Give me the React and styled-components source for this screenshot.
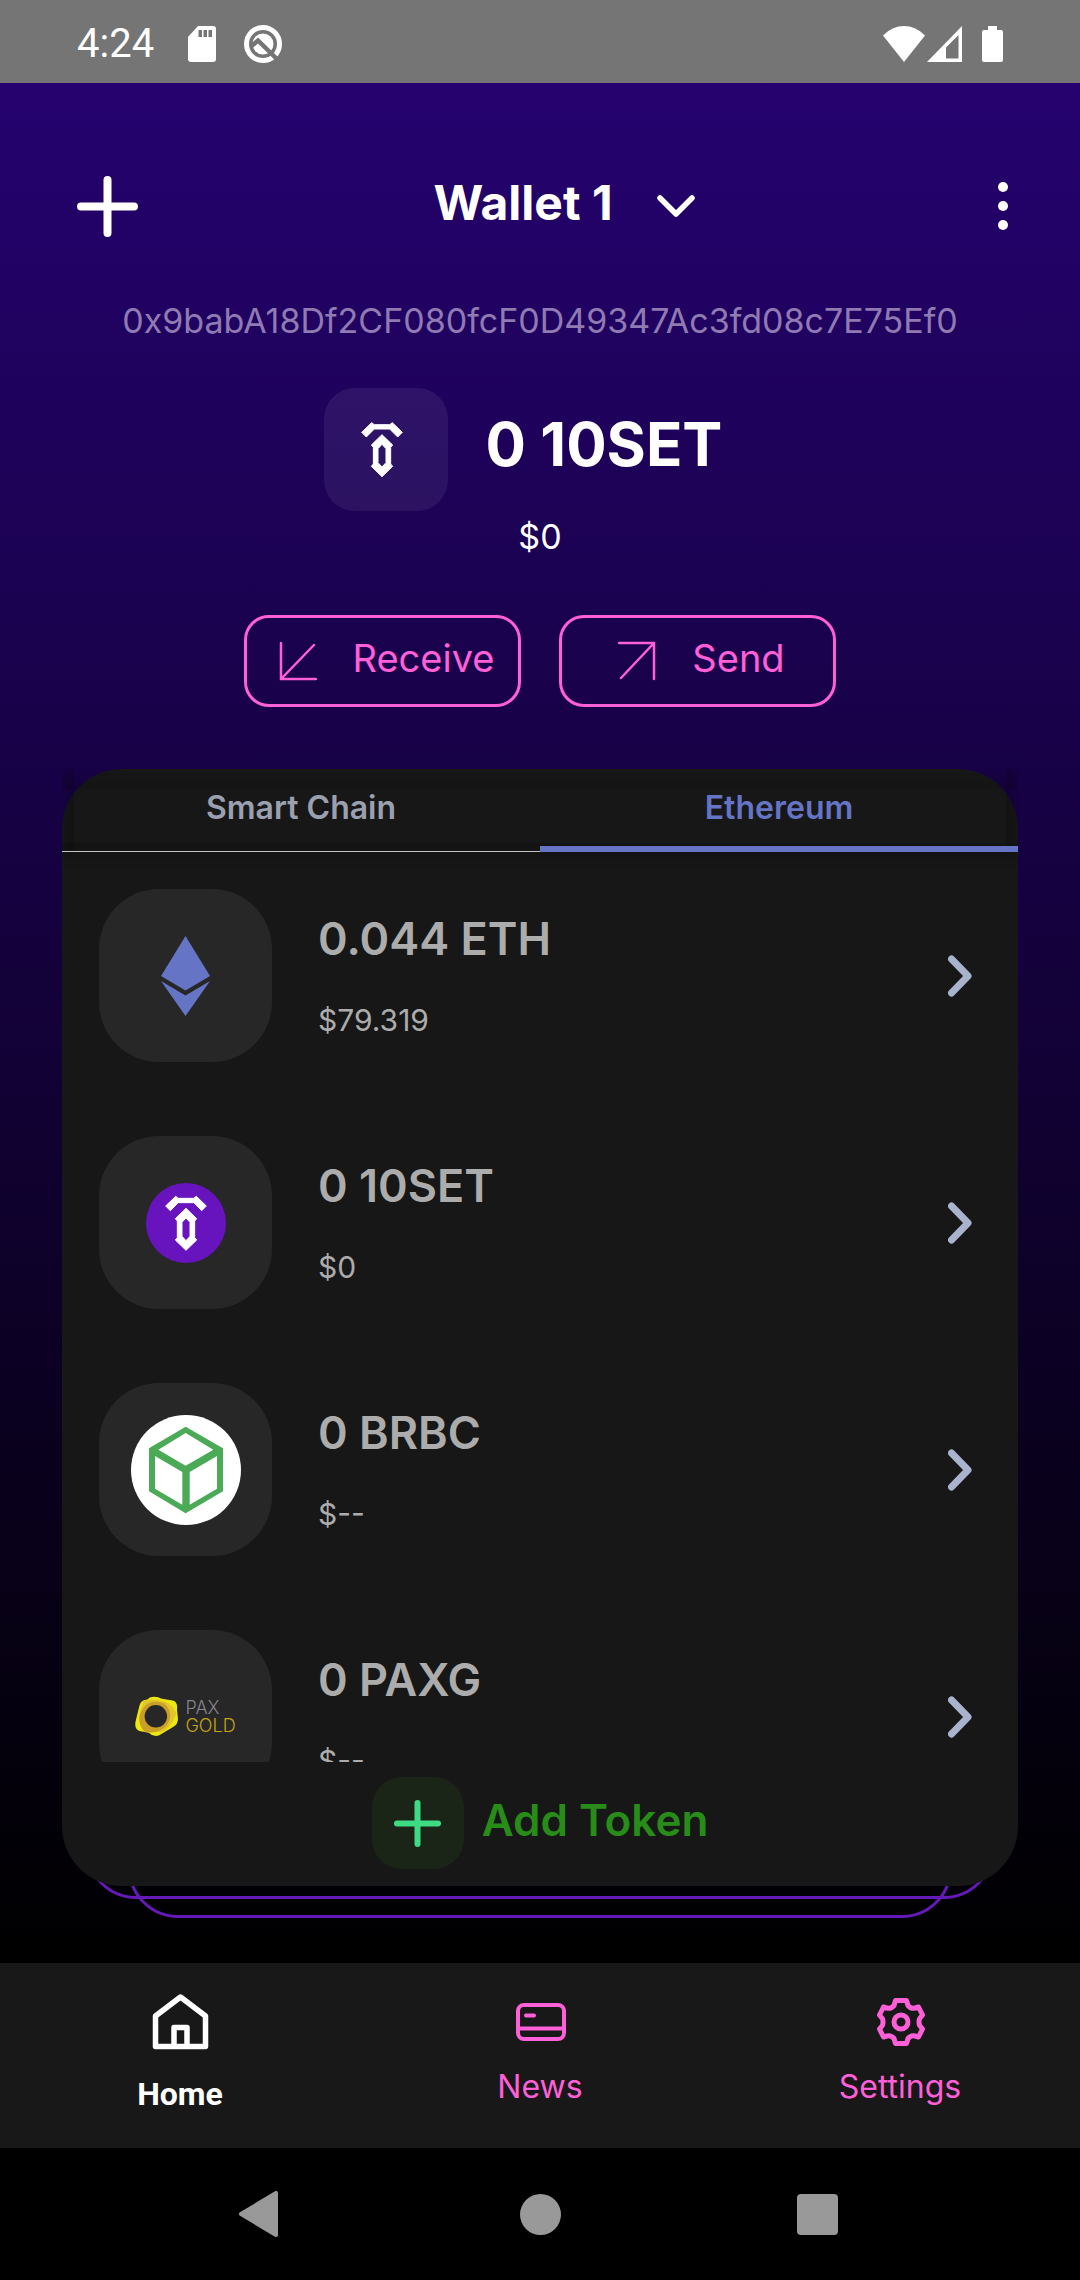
import React from "react";
import styled, { createGlobalStyle } from "styled-components";

const pink = "#ff5fd7";
const surface = "#171717";
const periwinkle = "#6574c4";

const GlobalStyle = createGlobalStyle`
  *, *::before, *::after { box-sizing: border-box; }
  body { margin: 0; background: #000; }
  button { font: inherit; color: inherit; background: none; border: 0; padding: 0; cursor: pointer; }
  a { color: inherit; text-decoration: none; }
  svg { display: block; flex: none; }
`;

const Screen = styled.div`
  display: flex;
  flex-direction: column;
  height: 100vh;
  font-family: Inter, "Noto Sans", sans-serif;
  color: #fff;
`;

const StatusBar = styled.header`
  display: flex;
  align-items: center;
  justify-content: space-between;
  height: 83px;
  flex: none;
  padding: 4px 77px 0;
  background: #757575;
  font-family: Roboto, sans-serif;
  font-size: 40px;
  line-height: 48px;
`;

const StatusGroup = styled.div`
  display: flex;
  align-items: center;
  gap: ${(p) => p.$gap}px;
`;

const Wallet = styled.main`
  flex: 1;
  min-height: 0;
  display: flex;
  flex-direction: column;
  padding: 63px 62px 77px;
  background: linear-gradient(#25026f, #000);
`;

const TopBar = styled.div`
  display: flex;
  align-items: center;
  justify-content: space-between;
  height: 120px;
  flex: none;
  padding: 0 10px;
`;

const IconButton = styled.button`
  display: flex;
  align-items: center;
  justify-content: ${(p) => p.$align || "center"};
  width: 70px;
  height: 70px;
`;

const WalletPicker = styled.button`
  display: flex;
  align-items: center;
  gap: 44px;
  padding-left: 48px;
  font-size: 48px;
  font-weight: 700;
  line-height: 56px;
`;

const PickerLabel = styled.span`
  padding-bottom: 6px;
`;

const Address = styled.p`
  margin: 31px 0 0;
  font-size: 34px;
  line-height: 48px;
  text-align: center;
  color: #8f7bb2;
`;

const Balance = styled.div`
  display: flex;
  align-items: center;
  justify-content: center;
  gap: 38px;
  margin-top: 43px;
  padding-right: 34px;
`;

const BalanceBadge = styled.div`
  display: flex;
  align-items: center;
  justify-content: center;
  width: 124px;
  height: 123px;
  padding-right: 8px;
  border-radius: 31px;
  background: rgba(255, 255, 255, 0.07);
`;

const BalanceAmount = styled.h1`
  margin: 0;
  padding-bottom: 12px;
  font-size: 60px;
  font-weight: 700;
  line-height: 72px;
`;

const Fiat = styled.p`
  margin: 2px 0 0;
  font-size: 34px;
  line-height: 48px;
  text-align: center;
`;

const Actions = styled.div`
  display: flex;
  justify-content: center;
  gap: 38px;
  margin-top: 54px;
`;

const ActionButton = styled.button`
  display: flex;
  align-items: center;
  justify-content: center;
  gap: 36px;
  width: 277px;
  height: 92px;
  padding-left: 8px;
  border: 3px solid ${pink};
  border-radius: 25px;
  color: ${pink};
  font-size: 38px;
  line-height: 48px;
`;

const ActionLabel = styled.span`
  padding-bottom: 6px;
`;

const CardStack = styled.section`
  position: relative;
  z-index: 0;
  flex: 1;
  min-height: 0;
  display: flex;
  flex-direction: column;
  margin-top: 62px;
`;

const StackEdge = styled.div`
  position: absolute;
  z-index: -1;
  bottom: ${(p) => -p.$drop}px;
  left: ${(p) => p.$inset}px;
  right: ${(p) => p.$inset}px;
  height: 160px;
  border: 3px solid #6419b8;
  border-radius: 50px;
`;

const Card = styled.div`
  flex: 1;
  min-height: 0;
  display: flex;
  flex-direction: column;
  border-radius: 60px;
  background: ${surface};
`;

const Tabs = styled.div`
  display: flex;
  flex: none;
  height: 83px;
  box-shadow: 0 6px 10px rgba(0, 0, 0, 0.2);
  clip-path: inset(0 0 -16px 0);
  background:
    linear-gradient(transparent, rgba(0, 0, 0, 0.16)) top / 100% 20px no-repeat,
    linear-gradient(rgba(0, 0, 0, 0.16), rgba(0, 0, 0, 0.16)) bottom / 100% 9px no-repeat,
    linear-gradient(to right, rgba(0, 0, 0, 0.08), rgba(0, 0, 0, 0.2)) left / 12px 100% no-repeat,
    linear-gradient(to left, rgba(0, 0, 0, 0.08), rgba(0, 0, 0, 0.2)) right / 12px 100% no-repeat;
`;

const Tab = styled.button`
  flex: 1;
  padding-bottom: ${(p) => (p.$active ? 0 : 5)}px;
  border-bottom: ${(p) => (p.$active ? `6px solid ${periwinkle}` : "1px solid #c4c4c4")};
  color: ${(p) => (p.$active ? periwinkle : "#9ba0b0")};
  font-size: 32px;
  font-weight: 600;
  line-height: 40px;
`;

const TokenList = styled.ul`
  flex: 1;
  min-height: 0;
  margin: 0;
  padding: 0;
  list-style: none;
  overflow-y: auto;
  scrollbar-width: none;
`;

const TokenRow = styled.a`
  display: flex;
  align-items: center;
  gap: 46px;
  padding: 37px 46px 37px 37px;
`;

const TokenTile = styled.div`
  display: flex;
  align-items: center;
  justify-content: center;
  width: 173px;
  height: 173px;
  flex: none;
  border-radius: 60px;
  background: #272727;
`;

const TokenText = styled.div`
  display: flex;
  flex-direction: column;
  gap: 25px;
  flex: 1;
  color: #acacac;
`;

const TokenAmount = styled.span`
  font-size: 45px;
  font-weight: 600;
  line-height: 64px;
`;

const TokenValue = styled.span`
  font-size: 30px;
  line-height: 48px;
`;

const PaxLogo = styled.div`
  display: flex;
  align-items: center;
  gap: 7px;
`;

const PaxName = styled.div`
  display: flex;
  flex-direction: column;
  font-size: 18px;
  font-weight: 300;
  line-height: 18px;
  color: #85858b;
`;

const PaxGold = styled.span`
  color: #c2a414;
`;

const AddToken = styled.button`
  display: flex;
  align-items: center;
  justify-content: center;
  gap: 18px;
  flex: none;
  padding: 15px 0 17px;
  color: #288c18;
  font-size: 44px;
  font-weight: 600;
  line-height: 48px;
`;

const AddBadge = styled.span`
  display: flex;
  align-items: center;
  justify-content: center;
  width: 92px;
  height: 92px;
  border-radius: 30px;
  background: #1a2518;
`;

const AddLabel = styled.span`
  padding-bottom: 6px;
`;

const BottomNav = styled.nav`
  display: flex;
  flex: none;
  height: 185px;
  background: #181818;
`;

const NavItem = styled.a`
  flex: 1;
  display: flex;
  flex-direction: column;
  align-items: center;
  gap: ${(p) => (p.$active ? 20 : 13)}px;
  padding-top: 27px;
  color: ${(p) => (p.$active ? "#fff" : pink)};
  font-family: ${(p) => (p.$active ? "Roboto" : "Inter")}, sans-serif;
  font-size: 32px;
  font-weight: ${(p) => (p.$active ? 700 : 400)};
  line-height: 40px;
`;

const SystemNav = styled.nav`
  display: flex;
  align-items: center;
  justify-content: center;
  flex: none;
  height: 132px;
  background: #000;
`;

const SystemButton = styled.button`
  display: flex;
  align-items: center;
  justify-content: center;
  width: 277px;
  height: 100%;
`;

const SdCardIcon = () => (
  <svg width="28" height="36" viewBox="0 0 28 36" fill="#fff">
    <path
      fillRule="evenodd"
      d="M10 0H25a3 3 0 0 1 3 3V33a3 3 0 0 1-3 3H3a3 3 0 0 1-3-3V11ZM10.500 4V11H14V4ZM15.500 4V11H19V4ZM20.500 4V11H24V4Z"
    />
  </svg>
);

const SearchBadgeIcon = () => (
  <svg width="38" height="38" viewBox="0 0 38 38" fill="none">
    <circle cx="19" cy="19" r="16.500" stroke="#fff" strokeWidth="5" />
    <circle cx="19" cy="19" r="10.500" fill="#fff" />
    <path d="M7 21.500L14 15.500L36 37" stroke="#757575" strokeWidth="4.500" />
  </svg>
);

const WifiIcon = () => (
  <svg width="42" height="36" viewBox="0 0 42 36" fill="#fff">
    <path d="M0 9.500Q9 0 21 0T42 9.500L21 36Z" />
  </svg>
);

const SignalIcon = () => (
  <svg width="35" height="36" viewBox="0 0 35 36" fill="#fff">
    <path fillRule="evenodd" d="M35 0V36H0ZM31.500 9L19 21.500V32.500H31.500Z" />
  </svg>
);

const BatteryIcon = () => (
  <svg width="21" height="36" viewBox="0 0 21 36" fill="#fff">
    <path d="M6 0H15V4H19a2 2 0 0 1 2 2V34a2 2 0 0 1-2 2H2a2 2 0 0 1-2-2V6a2 2 0 0 1 2-2H6Z" />
  </svg>
);

const PlusIcon = ({ size, weight, color }) => (
  <svg
    width={size}
    height={size}
    viewBox={`0 0 ${size} ${size}`}
    stroke={color}
    strokeWidth={weight}
    strokeLinecap="round"
  >
    <path d={`M${size / 2} ${weight / 2}V${size - weight / 2}M${weight / 2} ${size / 2}H${size - weight / 2}`} />
  </svg>
);

const ChevronDown = () => (
  <svg width="38" height="24" viewBox="0 0 38 24" fill="none" stroke="#fff" strokeWidth="5.500" strokeLinecap="round" strokeLinejoin="round">
    <path d="M3 4L19 20L35 4" />
  </svg>
);

const ChevronRight = () => (
  <svg width="24" height="42" viewBox="0 0 24 42" fill="none" stroke="#aab3ce" strokeWidth="7" strokeLinecap="round" strokeLinejoin="round">
    <path d="M3.500 4L20 21L3.500 38" />
  </svg>
);

const DotsIcon = () => (
  <svg width="10" height="48" viewBox="0 0 10 48" fill="#fff">
    <circle cx="5" cy="5" r="5" />
    <circle cx="5" cy="24" r="5" />
    <circle cx="5" cy="43" r="5" />
  </svg>
);

const ReceiveIcon = () => (
  <svg width="38" height="40" viewBox="0 0 38 40" fill="none" stroke="currentColor" strokeWidth="2.500" strokeLinecap="round">
    <path d="M2 2V38H37M2 38L35 4" />
  </svg>
);

const SendIcon = () => (
  <svg width="38" height="40" viewBox="0 0 38 40" fill="none" stroke="currentColor" strokeWidth="2.500" strokeLinecap="round">
    <path d="M1 2H36V38M36 2L3 37" />
  </svg>
);

const SetMark = () => (
  <g fill="#fff" stroke="#fff" strokeWidth="3" strokeLinejoin="round">
    <path d="M254 285L284 256L292 262H338L346 256L376 285L362 299L338 275H292L268 299Z" />
    <path
      fillRule="evenodd"
      d="M315 292L347 323L341 330V380L347 387L315 418L283 387L289 380V330L283 323ZM315 321L303 334V376L315 389L327 376V334Z"
    />
  </g>
);

const SetGlyph = () => (
  <svg width="44" height="57" viewBox="249 251 132 171">
    <SetMark />
  </svg>
);

const SetLogo = () => (
  <svg width="80" height="80" viewBox="195 216 240 240">
    <circle cx="315" cy="336" r="120" fill="#6713be" />
    <SetMark />
  </svg>
);

const EthLogo = () => (
  <svg width="49" height="80" viewBox="0 0 49 80" fill={periwinkle}>
    <path d="M24.500 0L49 40L24.500 54.500L0 40Z" />
    <path d="M0 45L24.500 59.500L49 45L24.500 80Z" />
  </svg>
);

const CubeLogo = () => (
  <svg width="110" height="110" viewBox="153 915 330 330">
    <circle cx="318" cy="1080" r="165" fill="#fff" />
    <path
      fill="#4aaa56"
      fillRule="evenodd"
      d="M317 950L429 1015V1144L317 1210L207 1144V1015ZM317 969L235 1019L317 1067L400 1019ZM225 1038V1136L307 1184V1086ZM329 1086V1184L411 1136V1038Z"
    />
  </svg>
);

const PaxCoin = () => (
  <svg width="43" height="41" viewBox="219 289 130 123">
    <path
      fill="#ece810"
      d="M264 293Q282 287 300 297L333 302Q349 306 346 330L349 358Q349 374 334 382L300 403Q280 418 260 400L232 394Q216 388 221 364L233 316Q238 300 256 299Z"
    />
    <path fill="#e2c62a" d="M246 303Q285 292 318 310Q346 330 343 346Q322 392 300 398L262 398Q234 372 233 340Z" />
    <path fill="#c99f28" d="M240 330Q258 302 290 306Q324 312 326 348Q322 380 296 392Q268 404 247 396Q230 378 232 350Z" />
    <circle cx="282" cy="350" r="34" fill="#272727" />
  </svg>
);

const NavSvg = ({ weight, children }) => (
  <svg
    width="64"
    height="64"
    viewBox="-32 -32 64 64"
    fill="none"
    stroke="currentColor"
    strokeWidth={weight}
    strokeLinecap="round"
    strokeLinejoin="round"
  >
    {children}
  </svg>
);

const HomeIcon = () => (
  <NavSvg weight={5.5}>
    <path d="M0.500 -25L25.500 -6V24.500H-24.500V-6ZM-6 24.500V5.500H7V24.500" />
  </NavSvg>
);

const NewsIcon = () => (
  <NavSvg weight={4}>
    <rect x="-22" y="-17" width="46" height="34" rx="6" />
    <path d="M-22 6.500H24M-14 -6.500H-6" />
  </NavSvg>
);

const SettingsIcon = () => (
  <NavSvg weight={5}>
    <g transform="translate(1 0)">
      <path d="M-5.500 -21.500H5.500L7 -16.500Q10 -13 14 -14L17.500 -15L21.500 -7L18.500 -3.200Q17.500 0 18.500 3.200L21.500 7L17.500 15L14 14Q10 13 7 16.500L5.500 21.500H-5.500L-7 16.500Q-10 13 -14 14L-17.500 15L-21.500 7L-18.500 3.200Q-17.500 0 -18.500 -3.200L-21.500 -7L-17.500 -15L-14 -14Q-10 -13 -7 -16.500Z" />
      <circle r="7" />
    </g>
  </NavSvg>
);

const tokens = [
  { amount: "0.044 ETH", value: "$79.319", logo: <EthLogo /> },
  { amount: "0 10SET", value: "$0", logo: <SetLogo /> },
  { amount: "0 BRBC", value: "$--", logo: <CubeLogo /> },
  {
    amount: "0 PAXG",
    value: "$--",
    logo: (
      <PaxLogo>
        <PaxCoin />
        <PaxName>
          <span>PAX</span>
          <PaxGold>GOLD</PaxGold>
        </PaxName>
      </PaxLogo>
    ),
  },
];

export default function App() {
  return (
    <Screen>
      <GlobalStyle />
      <StatusBar>
        <StatusGroup $gap={28}>
          <StatusGroup $gap={34}>
            <span>4:24</span>
            <SdCardIcon />
          </StatusGroup>
          <SearchBadgeIcon />
        </StatusGroup>
        <StatusGroup $gap={20}>
          <StatusGroup $gap={2}>
            <WifiIcon />
            <SignalIcon />
          </StatusGroup>
          <BatteryIcon />
        </StatusGroup>
      </StatusBar>

      <Wallet>
        <TopBar>
          <IconButton aria-label="New wallet">
            <PlusIcon size={61} weight={8} color="#fff" />
          </IconButton>
          <WalletPicker>
            <PickerLabel>Wallet 1</PickerLabel>
            <ChevronDown />
          </WalletPicker>
          <IconButton aria-label="More options" $align="flex-end">
            <DotsIcon />
          </IconButton>
        </TopBar>

        <Address>0x9babA18Df2CF080fcF0D49347Ac3fd08c7E75Ef0</Address>

        <Balance>
          <BalanceBadge>
            <SetGlyph />
          </BalanceBadge>
          <BalanceAmount>0 10SET</BalanceAmount>
        </Balance>
        <Fiat>$0</Fiat>

        <Actions>
          <ActionButton>
            <ReceiveIcon />
            <ActionLabel>Receive</ActionLabel>
          </ActionButton>
          <ActionButton>
            <SendIcon />
            <ActionLabel>Send</ActionLabel>
          </ActionButton>
        </Actions>

        <CardStack>
          <StackEdge $inset={24} $drop={13} />
          <StackEdge $inset={66} $drop={32} />
          <Card>
            <Tabs role="tablist">
              <Tab role="tab" aria-selected="false">Smart Chain</Tab>
              <Tab role="tab" aria-selected="true" $active>Ethereum</Tab>
            </Tabs>
            <TokenList>
              {tokens.map((t) => (
                <li key={t.amount}>
                  <TokenRow href="#token">
                    <TokenTile>{t.logo}</TokenTile>
                    <TokenText>
                      <TokenAmount>{t.amount}</TokenAmount>
                      <TokenValue>{t.value}</TokenValue>
                    </TokenText>
                    <ChevronRight />
                  </TokenRow>
                </li>
              ))}
            </TokenList>
            <AddToken>
              <AddBadge>
                <PlusIcon size={47} weight={6} color="#3ddc84" />
              </AddBadge>
              <AddLabel>Add Token</AddLabel>
            </AddToken>
          </Card>
        </CardStack>
      </Wallet>

      <BottomNav>
        <NavItem href="#home" $active>
          <HomeIcon />
          Home
        </NavItem>
        <NavItem href="#news">
          <NewsIcon />
          News
        </NavItem>
        <NavItem href="#settings">
          <SettingsIcon />
          Settings
        </NavItem>
      </BottomNav>

      <SystemNav>
        <SystemButton aria-label="Back">
          <svg width="48" height="46" viewBox="0 0 48 46" fill="#999" stroke="#999" strokeWidth="4" strokeLinejoin="round">
            <path d="M2 23L37 2V44Z" />
          </svg>
        </SystemButton>
        <SystemButton aria-label="Home screen">
          <svg width="41" height="41" viewBox="0 0 41 41" fill="#999">
            <circle cx="20.500" cy="20.500" r="20.500" />
          </svg>
        </SystemButton>
        <SystemButton aria-label="Recent apps">
          <svg width="41" height="41" viewBox="0 0 41 41" fill="#999">
            <rect width="41" height="41" rx="4" />
          </svg>
        </SystemButton>
      </SystemNav>
    </Screen>
  );
}
